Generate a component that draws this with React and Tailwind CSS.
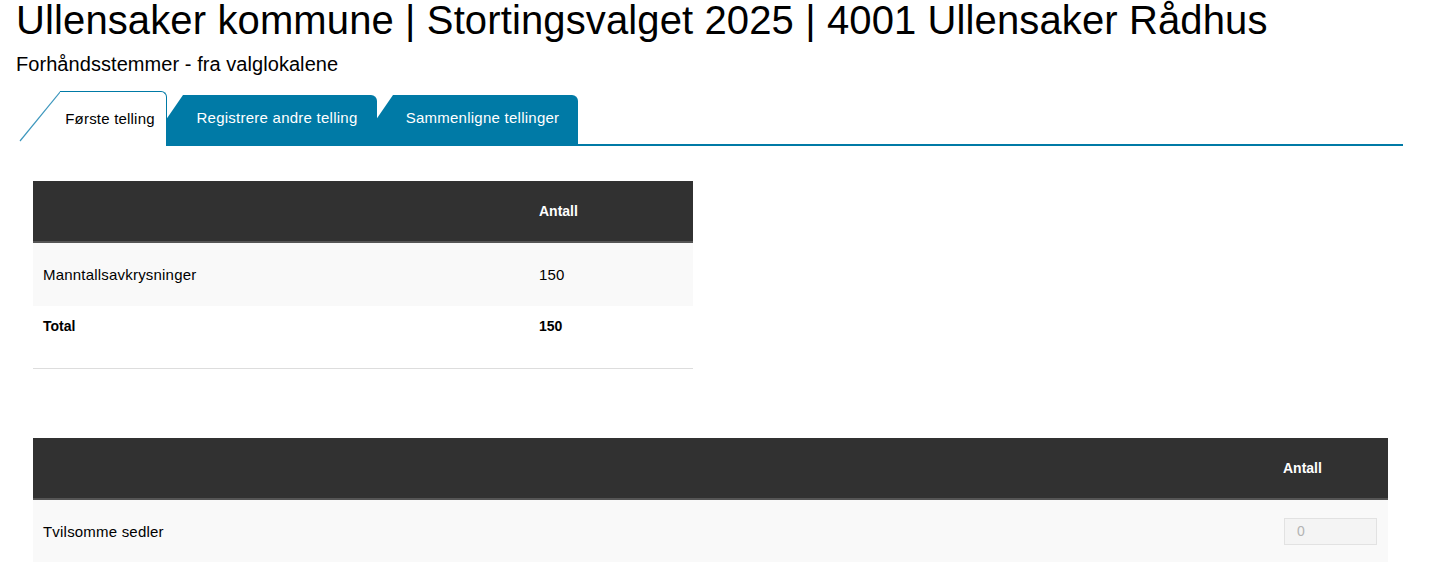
const firstRows = [{ label: "Manntallsavkrysninger", count: 150 }];

function ActiveTab({ label }) {
  return (
    <div className="relative z-30 flex h-[55px]">
      <svg width="44" height="55" viewBox="0 0 44 55" className="block shrink-0">
        <polygon points="0,55 44,0 44,55" fill="#ffffff" />
        <line x1="4" y1="50" x2="44.5" y2="0.5" stroke="#3d97bd" strokeWidth="1.2" />
      </svg>
      <div className="flex w-[107px] items-center justify-center rounded-tr-[6px] border-t border-r border-[#007aa6] bg-white pr-[6px] text-[15px] tracking-[0.2px] text-black">
        {label}
      </div>
    </div>
  );
}

function SlantTab({ label, className, bodyClass }) {
  return (
    <div className={className}>
      <svg width="35" height="51" viewBox="0 0 35 51" className="block shrink-0">
        <polygon points="0,51 35,0 35.5,0 35.5,51" fill="#007aa6" />
      </svg>
      <div className={bodyClass}>{label}</div>
    </div>
  );
}

export default function App() {
  return (
    <div className="min-h-[570px] bg-white font-['Liberation_Sans',Arial,sans-serif] text-black">
      <div className="pl-[16px]">
        <h1 className="m-0 text-[40px] leading-[40px] font-normal tracking-[0.12px]">
          Ullensaker kommune | Stortingsvalget 2025 | 4001 Ullensaker Rådhus
        </h1>
        <p className="mt-[13px] text-[20px] leading-[23px] tracking-[0.06px]">Forhåndsstemmer - fra valglokalene</p>
      </div>

      <div className="mt-[15px] flex items-end pl-[16px] pr-[37px]">
        <ActiveTab label="Første telling" />
        <SlantTab
          label="Registrere andre telling"
          className="relative z-20 -ml-[19px] flex h-[51px]"
          bodyClass="flex w-[194px] items-center justify-center rounded-tr-[6px] bg-[#007aa6] pb-[4px] pr-[6px] text-[15px] tracking-[0.25px] text-white"
        />
        <SlantTab
          label="Sammenligne tellinger"
          className="relative z-10 -ml-[19px] flex h-[51px]"
          bodyClass="flex w-[185px] items-center justify-center rounded-tr-[6px] bg-[#007aa6] pb-[4px] pr-[6px] text-[15px] tracking-[0.25px] text-white"
        />
        <div className="flex-1 border-b-2 border-[#007aa6]" />
      </div>

      <div className="pl-[33px] pr-[52px]">
        {/* første telling */}
        <div className="mt-[35px] w-[660px] border-b border-[#dddddd]">
          <div className="grid h-[62px] grid-cols-[496px_1fr] items-center border-b-2 border-[#555555] bg-[#313131] text-[14px] font-bold text-white">
            <div className="px-[10px]" />
            <div className="px-[10px]">Antall</div>
          </div>
          {firstRows.map((row) => (
            <div
              key={row.label}
              className="grid h-[63px] grid-cols-[496px_1fr] items-center bg-[#f9f9f9] pt-[2px] text-[15px] tracking-[0.2px]"
            >
              <div className="px-[10px]">{row.label}</div>
              <div className="px-[10px]">{row.count}</div>
            </div>
          ))}
          <div className="grid h-[40px] grid-cols-[496px_1fr] items-center text-[14px] font-bold">
            <div className="px-[10px]">Total</div>
            <div className="px-[10px]">150</div>
          </div>
          <div className="h-[22px]" />
        </div>

        {/* tvilsomme */}
        <div className="mt-[69px] w-full">
          <div className="grid h-[62px] grid-cols-[1240px_1fr] items-center border-b-2 border-[#555555] bg-[#313131] text-[14px] font-bold text-white">
            <div className="px-[10px]" />
            <div className="px-[10px]">Antall</div>
          </div>
          <div className="grid h-[62px] grid-cols-[1240px_1fr] items-center bg-[#f9f9f9] text-[15px] tracking-[0.2px]">
            <div className="px-[10px] pt-[2px]">Tvilsomme sedler</div>
            <div className="pl-[11px]">
              <input
                type="text"
                value="0"
                disabled
                readOnly
                className="h-[27px] w-[93px] border border-[#e2e2e2] bg-[#f4f4f4] px-[12px] text-[14px] text-[#b3b3b3] outline-none"
              />
            </div>
          </div>
        </div>
      </div>
    </div>
  );
}
